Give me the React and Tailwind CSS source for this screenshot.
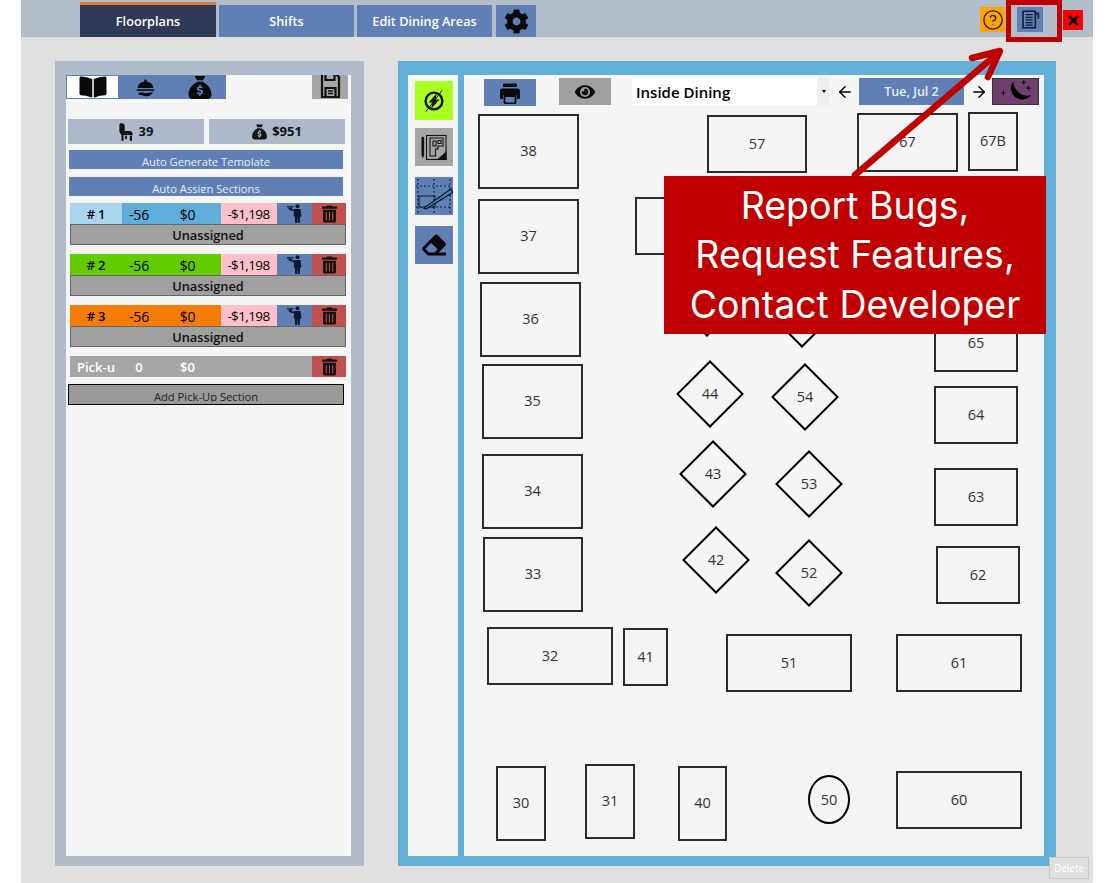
import React from "react";
import { FaBookOpen, FaCog, FaEye, FaEraser, FaTrashAlt, FaTimes } from "react-icons/fa";
import { FaSackDollar } from "react-icons/fa6";
import { ArrowLeft, ArrowRight, CircleHelp } from "lucide-react";

const rects = [
  ["38", 478, 114, 101, 75], ["37", 478, 199, 101, 75], ["36", 480, 282, 101, 75], ["35", 482, 364, 101, 75],
  ["34", 482, 454, 101, 75], ["33", 483, 537, 100, 75], ["32", 487, 627, 126, 58], ["41", 623, 628, 45, 58],
  ["51", 726, 634, 126, 58], ["61", 896, 634, 126, 58], ["30", 496, 766, 50, 75], ["31", 585, 764, 50, 75],
  ["40", 678, 766, 49, 75], ["60", 896, 771, 126, 58], ["62", 936, 546, 84, 58], ["63", 934, 468, 84, 58],
  ["64", 934, 386, 84, 58], ["65", 934, 314, 84, 58], ["57", 707, 115, 100, 58], ["67", 857, 113, 101, 59],
  ["67B", 968, 112, 50, 59], ["", 635, 197, 100, 58],
];
const diamonds = [
  ["", 707, 303], ["", 802, 314], ["44", 710, 394], ["54", 805, 397], ["43", 713, 474], ["53", 809, 484], ["42", 716, 560], ["52", 809, 573],
];
const OX = 464, OY = 75;

function Waiter() {
  return (
    <svg viewBox="0 0 16 19" className="w-[16px] h-[19px]" fill="#0c1830">
      <circle cx="10.500" cy="2.200" r="2" />
      <path d="M7.500 5h6l1 7.500h-1.400L12.800 19h-1.900l-.4-6-.4 6H8.200l-.4-6.500-1-.2V8.500z" />
      <path d="M0 2.200h6.500v1.100H0z" />
      <path d="M1 3.600h4.500L4.200 6H2.300z" />
      <path d="M3.500 5.200L8 5.500v2L3.500 6.500z" />
    </svg>
  );
}

function Cloche() {
  return (
    <svg viewBox="0 0 24 24" className="w-[21px] h-[21px]" fill="#0a0a0a">
      <circle cx="12" cy="4.500" r="1.600" />
      <path d="M3 12.500a9 7.500 0 0 1 18 0z" />
      <path d="M2 14h20v1.800H2z" />
      <path d="M4 18.500c3-1.500 5-1 7 .1l5-.6c2-.2 3.500-.9 4.500-1.500-.6 3-3.500 5.500-7.500 5.500-3 0-5-1.800-9-1.800z" />
    </svg>
  );
}

function BoltOff() {
  return (
    <svg viewBox="0 0 24 24" className="w-[24px] h-[24px]" fill="none" stroke="#111">
      <circle cx="12" cy="12" r="8.400" strokeWidth="2.400" />
      <path d="M15 4L6.500 13.500h4L9 20l8.500-9.500h-4z" fill="#111" stroke="none" />
      <path d="M20 1.500L4 22.500" strokeWidth="1" />
    </svg>
  );
}

function Plan() {
  return (
    <svg viewBox="0 0 28 28" className="w-[28px] h-[28px]" fill="none" stroke="#111" strokeWidth="1.100">
      <rect x="6.500" y="2.500" width="19.500" height="24" />
      <path d="M10 5h13v8h-5v3h-2.500v7H10zM13 8v5h3V8zM18 7.500h3v3h-3z" />
      <path d="M18 26.500l8-7v7z" fill="#111" />
      <path d="M1.500 5a1.300 1.300 0 0 1 2.600 0v17l-1.300 3.500L1.500 22z" fill="#111" stroke="none" />
    </svg>
  );
}

function GridPencil() {
  return (
    <svg viewBox="0 0 38 38" className="w-[38px] h-[38px]" fill="none" stroke="#0c1830">
      <path d="M1 9h36M1 30h36M3 2v34M19 2v34M35 2v34" strokeWidth="1.200" strokeDasharray="1.800 2.200" />
      <path d="M4 19h16v11H4z" strokeWidth="1" />
      <path d="M9 31L36 12l1.500 3.500L11 32z" fill="#5f7fb5" strokeWidth="1.200" />
      <path d="M8 32l2.500-2 1 2z" fill="#0c1830" stroke="none" />
    </svg>
  );
}

function Moon() {
  return (
    <svg viewBox="0 0 47 28" className="w-[47px] h-[27px]">
      <path d="M21 3.500a11.500 11.500 0 1 0 19 14c-8 3.500-18-3-19-14z" fill="#000" />
      <path d="M32 2v5M29.500 4.500h5M37 8v5M34.500 10.500h5M11 13v5M8.500 15.500h5" stroke="#000" strokeWidth="0.900" />
    </svg>
  );
}

function Notes() {
  return (
    <svg viewBox="0 0 24 24" className="w-[21px] h-[21px]" fill="none" stroke="#0f1c36" strokeWidth="1.800">
      <path d="M3.500 2.500h14v19h-14z" />
      <path d="M6.500 6.500h8M6.500 9.500h8M6.500 12.500h8M6.500 15.500h8M6.500 18.500h8" strokeWidth="1.500" />
      <path d="M17.500 5h3.500v6" />
    </svg>
  );
}

function Chair() {
  return (
    <svg viewBox="0 0 16 20" className="w-[14px] h-[18px]" fill="#111">
      <path d="M0.500 1.500C0.500 0.500 1.500 0 3 0c1.500 0 3 .6 3.500 2v6.800h5.500c2.200 0 3.500 1.300 3.500 3.200v1.500H5.200V20H2.800v-6.700L0.500 10z" />
      <path d="M12.300 14h2.600v6h-2.600zM7 14h2v4H7z" />
    </svg>
  );
}

function Save() {
  return (
    <svg viewBox="0 0 20 24" className="w-[21px] h-[24px]" fill="none" stroke="#111" strokeWidth="2.200">
      <path d="M1.500 -2h13l4 4v20h-17z" />
      <path d="M5 -1v6h9v-6" />
      <path d="M5 21v-8h10v8" />
      <path d="M7.500 16h5M7.500 18.500h5" strokeWidth="1.300" />
    </svg>
  );
}

function Printer() {
  return (
    <svg viewBox="0 0 22 22" className="w-[22px] h-[22px]">
      <path d="M5 1.500h12a1 1 0 0 1 1 1V5H4V2.500a1 1 0 0 1 1-1z" fill="#0a0a0a" />
      <path d="M3.500 6.500h15a2.500 2.500 0 0 1 2.500 2.500v7a1 1 0 0 1-1 1h-2v-4H4v4H2a1 1 0 0 1-1-1V9a2.500 2.500 0 0 1 2.500-2.500z" fill="#0a0a0a" />
      <path d="M5.500 14h11v6a1.500 1.500 0 0 1-1.500 1.500H7A1.500 1.500 0 0 1 5.500 20z" fill="none" stroke="#0a0a0a" strokeWidth="1.800" />
    </svg>
  );
}

function Section({ num, bg, numBg, mt }) {
  return (
    <div className={`w-[276px] ml-[4px] ${mt}`}>
      <div className={`flex h-[21px] text-[14px] font-medium tracking-[-0.2px] text-black ${bg}`}>
        <div className={`w-[52px] flex items-center justify-center font-semibold text-[13px] pt-[2px] ${numBg}`}>{num}</div>
        <div className="w-[34px] flex items-center justify-center pt-[2px]">-56</div>
        <div className="w-[65px] pr-[2px] flex items-center justify-center pt-[2px]">$0</div>
        <div className="w-[56px] flex items-center justify-center pt-[2px] pr-[1px] bg-[#ffc0cb] text-[13.500px] tracking-[-0.6px]">-$1,198</div>
        <div className="w-[35px] flex items-center justify-center bg-[#5f7fb5]"><Waiter /></div>
        <div className="w-[34px] flex items-center justify-center bg-[#c0504d]"><FaTrashAlt className="w-[15px] h-[18px] text-[#111]" /></div>
      </div>
      <div className="h-[21px] bg-[#a0a0a0] border border-[#666] flex items-center justify-center pt-[2px] text-[12.800px] font-semibold text-[#111]">Unassigned</div>
    </div>
  );
}

function ClippedButton({ label, mt }) {
  return (
    <div className={`w-[274px] h-[19px] ml-[3px] bg-[#5f7fb5] pt-[4px] ${mt}`}>
      <div className="h-[12px] overflow-hidden text-center text-[#e8edf6] text-[11.200px] leading-[15px]">{label}</div>
    </div>
  );
}

export default function App() {
  return (
    <div className="relative w-[1114px] h-[883px] bg-white overflow-hidden" style={{ fontFamily: '"Open Sans", sans-serif' }}>
      <div className="ml-[21px] w-[1072px] h-[883px] bg-[#e0e0e0] flex flex-col">
        {/* top bar */}
        <div className="h-[37px] bg-[#b3becb] flex items-end pl-[59px] shrink-0">
          <div className="w-[136px] h-[35px] bg-[#2f3a58] border-t-[3px] border-[#e07b39] text-white text-[12.700px] font-semibold flex items-center justify-center pt-[1px]">Floorplans</div>
          <div className="w-[135px] h-[32px] ml-[3px] bg-[#5f7fb5] text-white text-[12.700px] font-semibold flex items-center justify-center pt-[2px]">Shifts</div>
          <div className="w-[135px] h-[32px] ml-[3px] bg-[#5f7fb5] text-white text-[12.700px] font-semibold flex items-center justify-center whitespace-nowrap pt-[2px]">Edit Dining Areas</div>
          <div className="w-[40px] h-[32px] ml-[4px] bg-[#5f7fb5] flex items-center justify-center"><FaCog className="w-[25px] h-[25px] text-[#0a0a0a]" /></div>
          <div className="ml-[444px] mb-[5px] w-[25px] h-[25px] bg-[#ffa500] flex items-center justify-center"><CircleHelp className="w-[22px] h-[22px] text-[#222]" strokeWidth={1.500} /></div>
          <div className="ml-[12px] mb-[5px] w-[26px] h-[25px] bg-[#5f7fb5] flex items-center justify-center"><Notes /></div>
          <div className="ml-[20px] mb-[7px] w-[20px] h-[20px] bg-[#ff0000] flex items-center justify-center"><FaTimes className="w-[15px] h-[15px] text-[#111]" /></div>
        </div>

        {/* body */}
        <div className="flex pl-[34px] pt-[24px] gap-[34px]">
          {/* left panel */}
          <div className="w-[309px] h-[805px] bg-[#b0bcc9] pt-[14px] pl-[11px]">
            <div className="w-[285px] h-[781px] bg-[#f5f5f5]">
              <div className="flex h-[24px]">
                <div className="w-[53px] bg-white border border-[#5f7fb5] flex items-center justify-center"><FaBookOpen className="w-[28px] h-[24px] text-[#0a0a0a]" /></div>
                <div className="w-[107px] bg-[#5f7fb5] flex items-center pl-[16px] gap-[32px]">
                  <Cloche />
                  <FaSackDollar className="w-[24px] h-[23px] text-[#0a0a0a]" />
                </div>
                <div className="ml-[86px] w-[36px] bg-[#a6a6a6] flex items-center justify-center overflow-hidden"><Save /></div>
              </div>
              <div className="flex mt-[20px] ml-[2px] gap-[5px]">
                <div className="w-[136px] h-[25px] bg-[#adb9ca] flex items-center justify-center gap-[6px] text-[13px] font-bold text-[#111]"><Chair />39</div>
                <div className="w-[136px] h-[25px] bg-[#adb9ca] flex items-center justify-center gap-[5px] text-[13px] font-bold text-[#111]"><FaSackDollar className="w-[15px] h-[16px]" />$951</div>
              </div>
              <ClippedButton label="Auto Generate Template" mt="mt-[6px]" />
              <ClippedButton label="Auto Assign Sections" mt="mt-[8px]" />
              <Section num="# 1" bg="bg-[#5fadd8]" numBg="bg-[#aad7ef]" mt="mt-[7px]" />
              <Section num="# 2" bg="bg-[#62cc00]" numBg="bg-[#62cc00]" mt="mt-[9px]" />
              <Section num="# 3" bg="bg-[#f57c08]" numBg="bg-[#f57c08]" mt="mt-[9px]" />
              <div className="w-[276px] ml-[4px] mt-[9px] h-[21px] bg-[#a6a6a6] flex text-white text-[13px] font-semibold">
                <div className="w-[52px] pl-[7px] pt-[2px] flex items-center overflow-hidden whitespace-nowrap">Pick-u</div>
                <div className="w-[34px] pt-[2px] flex items-center justify-center">0</div>
                <div className="w-[65px] pt-[2px] pr-[2px] flex items-center justify-center">$0</div>
                <div className="ml-[91px] w-[34px] bg-[#c0504d] flex items-center justify-center"><FaTrashAlt className="w-[15px] h-[18px] text-[#111]" /></div>
              </div>
              <div className="w-[276px] h-[21px] mt-[7px] ml-[2px] bg-[#999] border border-black pt-[3px]">
                <div className="h-[14px] overflow-hidden text-center text-[#222] text-[11.200px] leading-[17px]">Add Pick-Up Section</div>
              </div>
            </div>
          </div>

          {/* right panel */}
          <div className="w-[658px] h-[805px] bg-[#62afd8] pt-[14px] pl-[10px] flex gap-[6px]">
            <div className="w-[50px] h-[781px] bg-[#f5f5f5] flex flex-col items-center pt-[6px] pl-[1px]">
              <div className="w-[38px] h-[39px] bg-[#a8ff20] flex items-center justify-center"><BoltOff /></div>
              <div className="w-[38px] h-[38px] mt-[8px] bg-[#a6a6a6] flex items-center justify-center"><Plan /></div>
              <div className="w-[38px] h-[38px] mt-[11px] bg-[#5f7fb5] flex items-center justify-center overflow-hidden"><GridPencil /></div>
              <div className="w-[38px] h-[38px] mt-[11px] bg-[#5f7fb5] flex items-center justify-center"><FaEraser className="w-[24px] h-[24px] text-[#0a0a0a]" /></div>
            </div>
            <div className="relative w-[580px] h-[781px] bg-[#f5f5f5]">
              <div className="flex items-start pt-[3px] pl-[20px]">
                <div className="w-[52px] h-[27px] mt-[1px] bg-[#5f7fb5] flex items-center justify-center"><Printer /></div>
                <div className="w-[52px] h-[27px] ml-[23px] bg-[#a0a0a0] flex items-center justify-center"><FaEye className="w-[22px] h-[18px] text-[#0a0a0a]" /></div>
                <div className="w-[198px] h-[27px] ml-[21px] bg-white flex items-center justify-between text-[15px] font-semibold text-black pl-[4px]">
                  <span className="pt-[1px]">Inside Dining</span>
                  <div className="w-[13px] h-[27px] bg-[#eee] flex items-center justify-center">
                    <div className="w-0 h-0 border-l-[2px] border-r-[2px] border-t-[3px] border-l-transparent border-r-transparent border-t-black" />
                  </div>
                </div>
                <div className="w-[29px] h-[27px] pl-[1px] flex items-center justify-center"><ArrowLeft className="w-[18px] h-[18px] text-black" strokeWidth={1.900} /></div>
                <div className="w-[105px] h-[27px] bg-[#5f7fb5] text-[#e8edf6] text-[12.500px] font-semibold flex items-center justify-center pt-[1px]">Tue, Jul 2</div>
                <div className="w-[28px] h-[27px] pl-[1px] flex items-center justify-center"><ArrowRight className="w-[18px] h-[18px] text-black" strokeWidth={1.900} /></div>
                <div className="w-[47px] h-[27px] bg-[#6f3f6f] border border-[#333] flex items-center justify-center overflow-hidden"><Moon /></div>
              </div>

              {rects.map(([n, x, y, w, h]) => (
                <div key={x + "-" + y} className="absolute border-2 border-[#2b2b2b] flex items-center justify-center pb-[1px] text-[14.500px] text-[#333]" style={{ left: x - OX, top: y - OY, width: w, height: h }}>{n}</div>
              ))}
              <div className="absolute rounded-[50%] border-2 border-black flex items-center justify-center text-[14.500px] text-[#333]" style={{ left: 808 - OX, top: 775 - OY, width: 42, height: 49 }}>50</div>
              {diamonds.map(([n, x, y]) => (
                <React.Fragment key={x + "-" + y}>
                  <div className="absolute w-[48px] h-[48px] rotate-45 border-2 border-black" style={{ left: x - 24 - OX, top: y - 24 - OY }} />
                  <div className="absolute w-[48px] h-[48px] flex items-center justify-center text-[14.500px] text-[#333]" style={{ left: x - 24 - OX, top: y - 24 - OY }}>{n}</div>
                </React.Fragment>
              ))}
            </div>
          </div>
        </div>
      </div>

      {/* annotation overlays */}
      <div className="absolute left-[1006px] top-0 w-[56px] h-[42px] border-[5px] border-[#c00000]" />
      <svg className="absolute left-0 top-0 w-[1114px] h-[883px] pointer-events-none" viewBox="0 0 1114 883" fill="none" stroke="#c00000" strokeWidth="6.500" strokeLinecap="round" strokeLinejoin="round">
        <path d="M855 175L998 53" />
        <path d="M972 58L1000 51L988 77" />
      </svg>
      <div className="absolute left-[664px] top-[176px] w-[382px] h-[158px] bg-[#c00000] text-white text-[37.500px] leading-[49.500px] text-center flex flex-col justify-center" style={{ fontFamily: 'Inter, sans-serif' }}>
        <div>Report Bugs,</div>
        <div>Request Features,</div>
        <div>Contact Developer</div>
      </div>
      <div className="absolute left-[1049px] top-[857px] w-[40px] h-[22px] bg-[#e0e0e0] border border-[#c8c8c8] text-white text-[10px] flex items-center justify-center">Delete</div>
    </div>
  );
}
